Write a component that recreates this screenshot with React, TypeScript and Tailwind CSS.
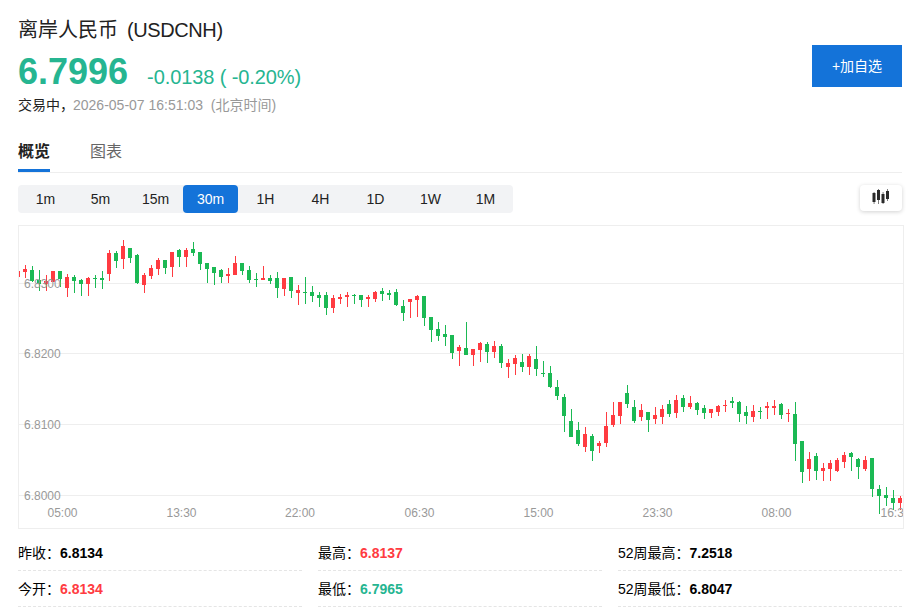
const FONT = '"Liberation Sans", "Noto Sans CJK SC", sans-serif';

type C = [string, number, number, number, number];
const candles: C[] = ([
  ['r',153,153,170,170],['r',136,147,156,175],['g',138,150,183,185],['g',151,180,193,212],['r',165,183,193,212],
  ['r',152,153,185,185],['g',152,153,177,200],['r',163,171,204,230],['g',166,171,183,220],['g',176,180,192,227],
  ['r',172,174,192,227],['g',166,174,177,203],['g',152,174,180,208],['r',90,99,162,182],['g',94,99,123,143],
  ['r',61,78,117,146],['g',83,84,114,130],['g',103,105,189,193],['r',160,165,195,220],['r',136,144,168,178],
  ['r',114,120,147,166],['g',120,120,144,163],['r',96,96,141,170],['g',88,90,111,140],['r',84,90,111,140],
  ['g',67,87,99,108],['g',95,96,132,151],['g',128,129,147,190],['g',141,141,159,196],['g',146,150,171,190],
  ['r',145,162,168,190],['r',109,129,165,166],['g',129,129,153,166],['g',139,150,180,190],['g',160,177,179,202],
  ['r',139,174,180,181],['g',166,174,183,193],['g',157,174,204,235],['r',174,174,207,229],['g',171,171,213,235],
  ['r',196,210,219,256],['g',172,216,218,253],['g',199,216,228,247],['g',217,225,234,262],['g',217,225,264,284],
  ['r',226,234,264,280],['r',223,231,237,253],['r',216,225,231,262],['g',223,225,227,253],['g',225,225,240,260],
  ['r',226,231,237,262],['r',212,216,237,247],['g',205,213,222,242],['g',211,219,225,241],['g',208,216,255,259],
  ['g',241,258,279,304],['r',237,237,246,295],['r',226,228,240,292],['g',228,228,294,319],['g',291,291,330,367],
  ['g',307,327,348,364],['g',316,342,351,379],['g',345,345,399,418],['r',376,381,393,439],['g',307,384,405,406],
  ['r',387,387,405,439],['r',366,369,390,425],['g',367,372,396,430],['r',364,378,396,415],['g',373,378,429,445],
  ['r',418,429,441,475],['r',404,414,432,466],['g',403,426,441,457],['r',403,408,441,464],['g',379,417,447,469],
  ['g',424,459,461,472],['g',439,459,501,505],['g',481,501,528,541],['g',523,531,587,635],['g',568,603,650,650],
  ['g',607,630,672,679],['r',622,642,681,695],['g',642,648,693,724],['r',663,669,677,700],['r',577,618,669,680],
  ['r',547,585,616,620],['r',546,546,587,613],['g',496,519,551,563],['g',541,562,603,610],['r',552,570,591,602],
  ['g',577,577,600,635],['r',562,585,597,612],['r',555,567,591,612],['g',541,552,582,590],['r',525,540,579,593],
  ['g',525,534,561,575],['r',528,549,561,566],['g',546,549,570,584],['g',556,564,579,596],['r',567,567,579,593],
  ['r',555,558,576,587],['r',540,555,558,575],['g',531,543,549,563],['g',543,546,582,607],['g',558,576,588,612],
  ['r',555,573,591,605],['g',562,573,576,596],['r',546,558,564,598],['r',540,558,564,584],['g',549,552,585,598],
  ['r',568,580,582,605],['g',547,582,672,722],['g',663,663,756,790],['r',697,718,747,782],['g',700,708,753,780],
  ['r',730,744,753,782],['r',721,729,747,782],['r',715,720,753,755],['r',697,705,726,743],['g',696,699,711,752],
  ['g',714,717,741,776],['r',709,720,747,753],['g',714,714,807,830],['g',795,807,828,881],['g',802,825,834,858],
  ['g',811,834,849,870],['r',828,834,849,870],
] as C[]);

const grid = [
  { y: 58, label: '6.8300' },
  { y: 128, label: '6.8200' },
  { y: 199, label: '6.8100' },
  { y: 270, label: '6.8000' },
];
const times = [
  { x: 44.5, t: '05:00' }, { x: 163.5, t: '13:30' }, { x: 282, t: '22:00' }, { x: 401.5, t: '06:30' },
  { x: 520.5, t: '15:00' }, { x: 639.5, t: '23:30' }, { x: 758.5, t: '08:00' }, { x: 877.5, t: '16:30' },
];

function Chart() {
  return (
    <svg width="886" height="304" viewBox="0 0 886 304" className="block" style={{ fontFamily: FONT }}>
      <rect x="0.5" y="0.5" width="885" height="303" fill="#fff" stroke="#eeeeee" />
      {grid.map(g => (
        <line key={g.y} x1="1" x2="885" y1={g.y + 0.5} y2={g.y + 0.5} stroke="#eeeeee" />
      ))}
      <svg x="1" y="1" width="884" height="302" viewBox="1 1 884 302">
        {candles.map((c, i) => {
          const x = 7 * i;
          const [col, hi, top, bot, lo] = c;
          const fill = col === 'r' ? '#ff3b41' : '#1bb954';
          const Y = (z: number) => Math.round(z / 3 - 5);
          const t = Y(top);
          const b = Math.max(Y(bot), t + 1);
          return (
            <g key={i} fill={fill} shapeRendering="crispEdges">
              <rect x={x} y={Y(hi)} width="1" height={Math.max(Y(lo) - Y(hi), 1)} />
              <rect x={x - 2} y={t} width="4" height={b - t} />
            </g>
          );
        })}
        {grid.map(g => (
          <text key={g.label} x="6" y={g.y + 5} fontSize="12" fill="#999999">{g.label}</text>
        ))}
        {times.map(t => (
          <text key={t.t} x={t.x} y="292" fontSize="12" fill="#999999" textAnchor="middle">{t.t}</text>
        ))}
      </svg>
    </svg>
  );
}

function CandleIcon() {
  return (
    <svg width="18" height="16" viewBox="0 0 18 16" fill="#2b2b2b" className="mt-[-2px]">
      <rect x="0.5" y="4" width="3" height="9" /><rect x="1.75" y="3" width="0.6" height="12" />
      <rect x="5" y="1" width="3" height="10" /><rect x="6.25" y="0" width="0.6" height="15" />
      <rect x="9.5" y="5" width="3" height="9" /><rect x="10.75" y="3" width="0.6" height="12" />
      <rect x="14" y="2" width="3" height="8" /><rect x="15.25" y="0" width="0.6" height="12" />
    </svg>
  );
}

const periods = ['1m', '5m', '15m', '30m', '1H', '4H', '1D', '1W', '1M'];

function Stat({ label, value, color }: { label: string; value: string; color: string }) {
  return (
    <div className="h-9 flex items-center border-b border-dashed border-[#e5e5e5] text-sm text-black">
      <span>{label}：</span>
      <span className={`font-bold ${color}`}>{value}</span>
    </div>
  );
}

export default function App() {
  return (
    <div className="w-[916px] h-[608px] overflow-hidden bg-white pl-[18px]" style={{ fontFamily: FONT }}>
      <div className="w-[884px] relative">
        <h1 className="pt-[17px] h-[44px] text-xl leading-[26px] font-normal text-[#222222]">
          离岸人民币<span className="ml-[9px] tracking-[-0.4px]">(USDCNH)</span>
        </h1>
        <div className="flex items-baseline h-[39px] mt-[9px]">
          <span className="text-[36px] leading-[38px] font-bold text-[#26b591]">6.7996</span>
          <span className="ml-[19px] text-xl leading-[38px] tracking-[-0.1px] text-[#26b591]">-0.0138 ( -0.20%)</span>
        </div>
        <div className="h-[22px] text-sm leading-[22px] mt-[2px] text-[#999999]">
          <span className="text-[#222222] mr-[-1px]">交易中，</span>2026-05-07 16:51:03&nbsp;&nbsp;(北京时间)
        </div>
        <button className="absolute right-0 top-[45px] w-[90px] h-[42px] bg-[#1473d9] text-white text-sm">+加自选</button>
      </div>
      <div className="mt-[24px] flex gap-10 w-[884px] h-[33px] border-b border-[#eeeeee] text-base">
        <div className="w-8 h-[32px] leading-[24px] font-bold text-[#222222] border-b-[3px] border-[#1473d9]">概览</div>
        <div className="leading-[24px] text-[#666666]">图表</div>
      </div>
      <div className="flex justify-between items-start mt-[12px] w-[884px]">
        <div className="flex bg-[#f2f3f5] rounded-sm h-7">
          {periods.map(p => (
            <div
              key={p}
              className={p === '30m'
                ? 'w-[55px] h-7 flex items-center justify-center text-sm rounded-sm bg-[#1473d9] text-white'
                : 'w-[55px] h-7 flex items-center justify-center text-sm text-[#222222]'}
            >
              {p}
            </div>
          ))}
        </div>
        <div className="w-[42px] h-[26px] rounded bg-white shadow-[0_1px_4px_rgba(0,0,0,0.18)] flex items-center justify-center">
          <CandleIcon />
        </div>
      </div>
      <div className="mt-3">
        <Chart />
      </div>
      <div className="grid grid-cols-3 gap-x-4 w-[884px] mt-[6px]">
        <Stat label="昨收" value="6.8134" color="text-black" />
        <Stat label="最高" value="6.8137" color="text-[#ff3b41]" />
        <Stat label="52周最高" value="7.2518" color="text-black" />
        <Stat label="今开" value="6.8134" color="text-[#ff3b41]" />
        <Stat label="最低" value="6.7965" color="text-[#26b591]" />
        <Stat label="52周最低" value="6.8047" color="text-black" />
      </div>
    </div>
  );
}
